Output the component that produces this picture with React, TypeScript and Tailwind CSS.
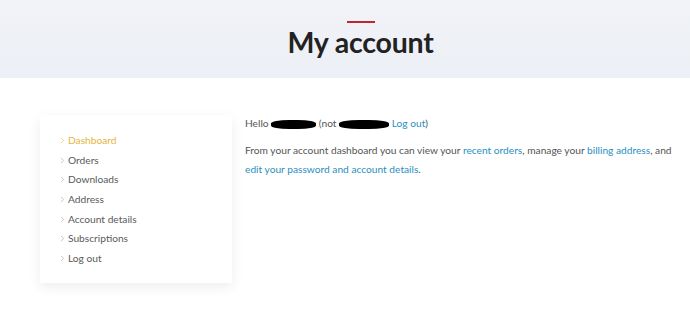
import { ChevronRight } from 'lucide-react';

const items = ['Dashboard', 'Orders', 'Downloads', 'Address', 'Account details', 'Subscriptions', 'Log out'];

const Blob = ({ w }: { w: number }) => (
  <span
    className="inline-block h-[9px] rounded-[40%] bg-black align-middle"
    style={{ width: w }}
  />
);

const App = () => {
  return (
    <div className="h-[311px] w-[690px] overflow-hidden bg-white font-['Lato',sans-serif] text-[10.2px] text-[#555]">
      <header className="flex h-[78px] flex-col items-center bg-gradient-to-b from-[#f1f3f8] to-[#eceff5] pl-[31px] pt-[21px]">
        <div className="h-[2px] w-[28px] bg-[#c0262d]" />
        <h1 className="mt-[2px] text-[28.5px] font-bold leading-[34px] tracking-[-0.2px] text-[#222]">My account</h1>
      </header>
      <div className="flex gap-[13px] pl-[40px] pt-[37px]">
        <nav className="h-[168px] w-[192px] bg-white py-[16px] pl-[18px] shadow-[0_4px_12px_rgba(0,0,0,0.07)]">
          <ul className="flex flex-col">
            {items.map((item, i) => (
              <li key={item} className={`flex h-[19.6px] items-center gap-[1px] ${i === 0 ? 'text-[#e6b53c]' : 'text-[#5a5a5a]'}`}>
                <ChevronRight className={`size-[9px] ${i === 0 ? 'text-[#e6b53c]' : 'text-[#999]'}`} strokeWidth={1.5} />
                <span>{item}</span>
              </li>
            ))}
          </ul>
        </nav>
        <main className="-mt-[1px]">
          <p className="leading-[19.5px]">
            Hello <Blob w={45} /> (not <Blob w={50} /> <a className="text-[#2b8fbf]">Log out</a>)
          </p>
          <p className="mt-[7px] w-[435px] leading-[19.5px]">
            From your account dashboard you can view your <a className="text-[#2b8fbf]">recent orders</a>, manage your{' '}
            <a className="text-[#2b8fbf]">billing address</a>, and <a className="text-[#2b8fbf]">edit your password and account details</a>.
          </p>
        </main>
      </div>
    </div>
  );
};

export default App;
